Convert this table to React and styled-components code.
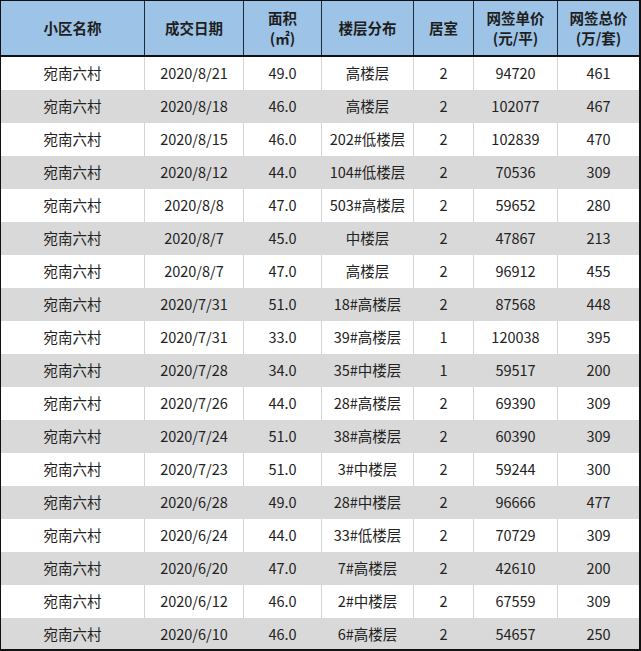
import styled, { createGlobalStyle } from "styled-components";

const GlobalStyle = createGlobalStyle`
  html, body {
    margin: 0;
    padding: 0;
    background: #ffffff;
  }
  body {
    font-family: "Noto Sans CJK SC", "Noto Sans", sans-serif;
  }
`;

const columns = "144px 99px 78px 92px 60px 84px 81px";

const headers = [
  ["小区名称"],
  ["成交日期"],
  ["面积", "(㎡)"],
  ["楼层分布"],
  ["居室"],
  ["网签单价", "(元/平)"],
  ["网签总价", "(万/套)"],
];

const rows = [
  ["宛南六村", "2020/8/21", "49.0", "高楼层", "2", "94720", "461"],
  ["宛南六村", "2020/8/18", "46.0", "高楼层", "2", "102077", "467"],
  ["宛南六村", "2020/8/15", "46.0", "202#低楼层", "2", "102839", "470"],
  ["宛南六村", "2020/8/12", "44.0", "104#低楼层", "2", "70536", "309"],
  ["宛南六村", "2020/8/8", "47.0", "503#高楼层", "2", "59652", "280"],
  ["宛南六村", "2020/8/7", "45.0", "中楼层", "2", "47867", "213"],
  ["宛南六村", "2020/8/7", "47.0", "高楼层", "2", "96912", "455"],
  ["宛南六村", "2020/7/31", "51.0", "18#高楼层", "2", "87568", "448"],
  ["宛南六村", "2020/7/31", "33.0", "39#高楼层", "1", "120038", "395"],
  ["宛南六村", "2020/7/28", "34.0", "35#中楼层", "1", "59517", "200"],
  ["宛南六村", "2020/7/26", "44.0", "28#高楼层", "2", "69390", "309"],
  ["宛南六村", "2020/7/24", "51.0", "38#高楼层", "2", "60390", "309"],
  ["宛南六村", "2020/7/23", "51.0", "3#中楼层", "2", "59244", "300"],
  ["宛南六村", "2020/6/28", "49.0", "28#中楼层", "2", "96666", "477"],
  ["宛南六村", "2020/6/24", "44.0", "33#低楼层", "2", "70729", "309"],
  ["宛南六村", "2020/6/20", "47.0", "7#高楼层", "2", "42610", "200"],
  ["宛南六村", "2020/6/12", "46.0", "2#中楼层", "2", "67559", "309"],
  ["宛南六村", "2020/6/10", "46.0", "6#高楼层", "2", "54657", "250"],
];

const Sheet = styled.div`
  width: 641px;
  height: 651px;
  overflow: hidden;
  box-sizing: border-box;
  border-top: 1px solid #111;
  border-left: 1px solid #111;
  border-right: 2px solid #111;
  border-bottom: 2px solid #111;
`;

const Row = styled.div`
  display: grid;
  grid-template-columns: ${columns};
  height: ${(p) => (p.$head ? "56px" : "33px")};
  background: ${(p) => (p.$head ? "#9dc3e6" : p.$striped ? "#d9d9d9" : "#ffffff")};
  border-bottom: ${(p) => (p.$head ? "2px solid #111" : "none")};
  box-sizing: border-box;
`;

const HeadCell = styled.div`
  display: flex;
  flex-direction: column;
  align-items: center;
  justify-content: center;
  box-sizing: border-box;
  border-right: ${(p) => (p.$last ? "none" : "1px solid #1c2a3a")};
  font-size: 14.5px;
  font-weight: 700;
  line-height: 20px;
  color: #1e1e1e;
`;

const Cell = styled.div`
  display: flex;
  align-items: center;
  justify-content: center;
  box-sizing: border-box;
  border-right: ${(p) => (p.$last ? "none" : `1px solid ${p.$striped ? "#d9d9d9" : "#d4d4d4"}`)};
  font-size: 14.5px;
  color: #222;
  padding-bottom: 3px;
`;

export default function App() {
  return (
    <>
      <GlobalStyle />
      <Sheet>
        <Row $head>
          {headers.map((lines, i) => (
            <HeadCell key={i} $last={i === headers.length - 1}>
              {lines.map((l) => (
                <span key={l}>{l}</span>
              ))}
            </HeadCell>
          ))}
        </Row>
        {rows.map((r, ri) => (
          <Row key={ri} $striped={ri % 2 === 1}>
            {r.map((v, ci) => (
              <Cell key={ci} $striped={ri % 2 === 1} $last={ci === r.length - 1}>
                {v}
              </Cell>
            ))}
          </Row>
        ))}
      </Sheet>
    </>
  );
}
